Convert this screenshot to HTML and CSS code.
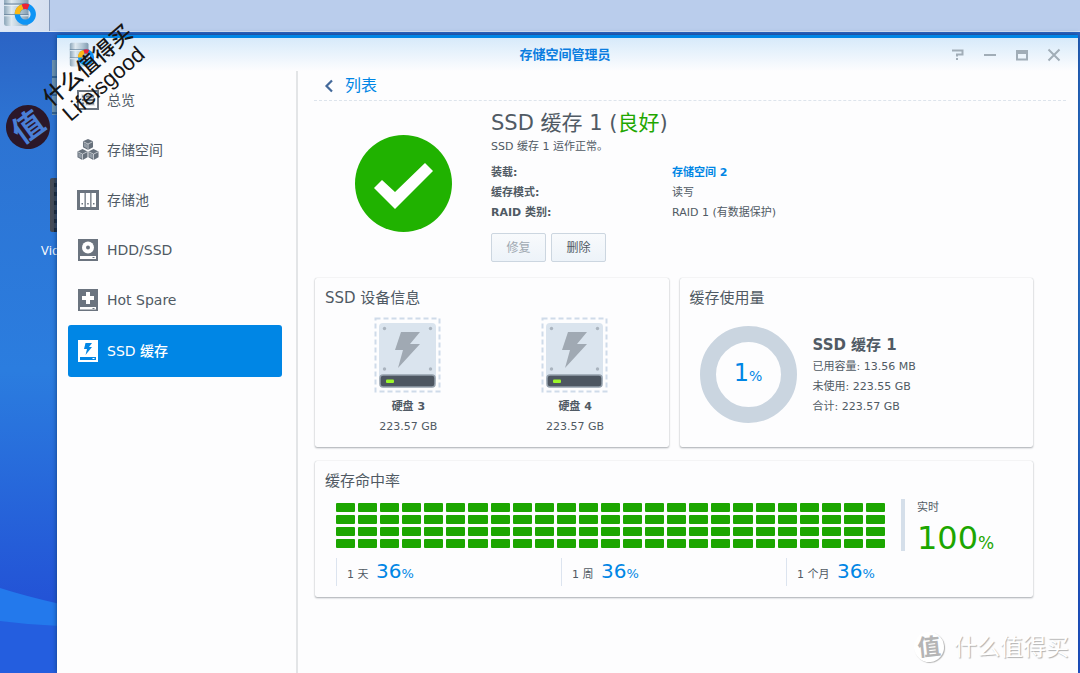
FILE: index.html
```html
<!DOCTYPE html>
<html lang="zh-CN">
<head>
<meta charset="utf-8">
<title>存储空间管理员</title>
<link rel="stylesheet" href="styles.css">
</head>
<body>
<svg class="defs" aria-hidden="true">
  <defs>
    <linearGradient id="steel" x1="0" x2="1">
      <stop offset="0" stop-color="#8ba5b8"/><stop offset=".3" stop-color="#dfe9f0"/><stop offset=".65" stop-color="#b4c8d6"/><stop offset="1" stop-color="#809bb0"/>
    </linearGradient>
    <symbol id="app" viewBox="0 0 32 32">
      <rect x="1" y="1" width="23" height="29" rx="2" fill="url(#steel)"/>
      <path d="M1 9.500h23M1 19.500h23" stroke="#64809a" stroke-width="1"/>
      <path d="M1 10.500h23M1 20.500h23" stroke="#eef5fa" stroke-width="1"/>
      <circle cx="21" cy="19" r="7.500" fill="none" stroke="#0e94f5" stroke-width="5"/>
      <path d="M13.500 19A7.500 7.500 0 0 1 18.500 12" fill="none" stroke="#fdb813" stroke-width="5"/>
      <path d="M18.500 12A7.500 7.500 0 0 1 24 12.200" fill="none" stroke="#ee2233" stroke-width="5"/>
    </symbol>
    <symbol id="cube" viewBox="0 0 12 12">
      <path d="M6 0l5.500 2.500v6.500L6 12 .5 9V2.500z" fill="#67717c"/>
      <path d="M1 3l5 2.500L11 3M6 5.500V12" fill="none" stroke="#e3e7ea" stroke-width=".8"/>
      <path d="M1.500 4.300l3.700 1.900v4L1.500 8.300z" fill="#929ba5"/>
    </symbol>
    <symbol id="disk" viewBox="0 0 68 76">
      <rect x="1.500" y="1.500" width="64" height="73" fill="none" stroke="#cfdbe9" stroke-width="2" stroke-dasharray="5 3"/>
      <rect x="5" y="6" width="57" height="60" rx="4" fill="#dae4ee"/>
      <g fill="#aab4bf"><circle cx="10.500" cy="11.500" r="1.700"/><circle cx="56.500" cy="11.500" r="1.700"/><circle cx="10.500" cy="52" r="1.700"/><circle cx="56.500" cy="52" r="1.700"/></g>
      <path d="M27 15h19L36 27h10L24 51l5-18h-8z" fill="#a0a9b3"/>
      <rect x="6" y="58" width="55" height="12" rx="3" fill="#4d5661" stroke="#94a0ac" stroke-width="1.500"/>
      <rect x="12" y="62.500" width="8" height="3.500" rx="1" fill="#9cf72b"/>
    </symbol>
  </defs>
</svg>

<div class="desktop">
  <header class="taskbar">
    <button class="task" type="button" aria-label="存储空间管理员"><svg width="34" height="34"><use href="#app"/></svg></button>
  </header>

  <svg class="wave" viewBox="0 0 60 85" preserveAspectRatio="none" aria-hidden="true">
    <path d="M0 0Q25 8 60 16V85H0z" fill="#2379ec"/><path d="M0 33Q30 37 60 38V85H0z" fill="#245edf"/>
  </svg>
  <div class="shortcut-store"></div>
  <div class="shortcut-video"></div>
  <span class="shortcut-label">Vid</span>

  <section class="window">
    <div class="titlebar">
      <svg class="title-icon" width="26" height="26"><use href="#app"/></svg>
      <h1>存储空间管理员</h1>
      <div class="controls">
        <button type="button" aria-label="帮助"><svg width="14" height="14" viewBox="0 0 14 14"><path d="M1 2.500h10.500v4H6v2" fill="none" stroke="#a1adb7" stroke-width="2"/><path d="M5 10h2v2H5z" fill="#a1adb7"/></svg></button>
        <button type="button" aria-label="最小化"><svg width="14" height="14" viewBox="0 0 14 14"><path d="M1 7h12" stroke="#a1adb7" stroke-width="2"/></svg></button>
        <button type="button" aria-label="最大化"><svg width="14" height="14" viewBox="0 0 14 14"><path d="M1 2h12v10.500H1z" fill="#a1adb7"/><path d="M3 6h8v4.500H3z" fill="#edf5fc"/></svg></button>
        <button type="button" aria-label="关闭"><svg width="14" height="14" viewBox="0 0 14 14"><path d="M1.500 1.500l11 11m0-11l-11 11" stroke="#a1adb7" stroke-width="2"/></svg></button>
      </div>
    </div>

    <div class="body">
      <nav class="sidebar">
        <a href="#"><svg width="22" height="22" viewBox="0 0 22 22"><rect x="1" y="2" width="20" height="18" fill="none" stroke="#6b747f" stroke-width="2"/><path d="M4 5h14v12H4z" fill="#e4e7ea"/><path d="M5 7.500h2m2 0h8M5 11h2m2 0h8M5 14.500h2m2 0h8" stroke="#6b747f" stroke-width="1.800"/></svg>总览</a>
        <a href="#"><svg width="24" height="24" viewBox="0 0 24 24"><use href="#cube" x="6" y="0" width="12" height="12"/><use href="#cube" x="0" y="11" width="12" height="12"/><use href="#cube" x="12" y="11" width="12" height="12"/></svg>存储空间</a>
        <a href="#"><svg width="22" height="22" viewBox="0 0 22 22"><path d="M0 1h22v20H0z" fill="#6b747f"/><path d="M3 4h4.500v14H3zM8.800 4h4.400v14H8.800zM14.500 4H19v14h-4.500z" fill="#fff"/><path d="M4.500 14h1.500v1.500h-1.500zM10.200 14h1.500v1.500h-1.500zM16 14h1.500v1.500H16z" fill="#6b747f"/></svg>存储池</a>
        <a href="#"><svg width="22" height="22" viewBox="0 0 22 22"><path d="M1 0h20v22H1z" fill="#6b747f"/><circle cx="11" cy="8.500" r="6" fill="#fff"/><circle cx="11" cy="8.500" r="2" fill="#6b747f"/><path d="M3 17h16v3H3z" fill="#fff"/><path d="M15.500 18h2v1h-2z" fill="#6b747f"/></svg>HDD/SSD</a>
        <a href="#"><svg width="22" height="22" viewBox="0 0 22 22"><path d="M1 0h20v22H1z" fill="#6b747f"/><path d="M9 3h4v4h4v4h-4v4H9v-4H5V7h4z" fill="#fff"/><path d="M3 18h16v2.500H3z" fill="#fff"/><path d="M15.500 19h2v1h-2z" fill="#6b747f"/></svg>Hot Spare</a>
        <a href="#" class="active"><svg width="22" height="22" viewBox="0 0 22 22"><path d="M1 0h20v22H1z" fill="#fff"/><path d="M8.500 3H15l-3 4h3l-6.500 8 1.500-6H7zM3 17h16v3H3z" fill="#0086e5"/><path d="M15.500 18h2v1h-2z" fill="#fff"/></svg>SSD 缓存</a>
      </nav>

      <main class="main">
        <a class="back" href="#"><svg width="10" height="14" viewBox="0 0 10 14"><path d="M8 1.500L2.500 7 8 12.500" fill="none" stroke="#43699a" stroke-width="2.200"/></svg>列表</a>

        <div class="content">
          <section class="summary">
            <svg class="health" width="97" height="97" viewBox="0 0 97 97"><circle cx="48.500" cy="48.500" r="48.500" fill="#20b200"/><path d="M19 53l8-8 13 12 30-29 8 8-38 38z" fill="#fff"/></svg>
            <div class="details">
              <h2>SSD 缓存 1 (<span class="good">良好</span>)</h2>
              <p>SSD 缓存 1 运作正常。</p>
              <dl>
                <dt>装载:</dt><dd><a href="#">存储空间 2</a></dd>
                <dt>缓存模式:</dt><dd>读写</dd>
                <dt>RAID 类别:</dt><dd>RAID 1 (有数据保护)</dd>
              </dl>
              <div class="actions"><button type="button" disabled>修复</button><button type="button">删除</button></div>
            </div>
          </section>

          <div class="cards">
            <section class="card">
              <h3>SSD 设备信息</h3>
              <div class="disks">
                <div class="disk"><svg width="68" height="76"><use href="#disk"/></svg><b>硬盘 3</b><span>223.57 GB</span></div>
                <div class="disk"><svg width="68" height="76"><use href="#disk"/></svg><b>硬盘 4</b><span>223.57 GB</span></div>
              </div>
            </section>
            <section class="card">
              <h3>缓存使用量</h3>
              <div class="usage">
                <div class="donut"><span>1<small>%</small></span></div>
                <div class="capacity"><h4>SSD 缓存 1</h4><p>已用容量: 13.56 MB</p><p>未使用: 223.55 GB</p><p>合计: 223.57 GB</p></div>
              </div>
            </section>
            <section class="card wide">
              <h3>缓存命中率</h3>
              <div class="hits">
                <div class="bars" id="bars"></div>
                <div class="live"><span>实时</span><strong>100<small>%</small></strong></div>
              </div>
              <div class="history">
                <div>1 天 <strong>36<small>%</small></strong></div>
                <div>1 周 <strong>36<small>%</small></strong></div>
                <div>1 个月 <strong>36<small>%</small></strong></div>
              </div>
            </section>
          </div>
        </div>
      </main>
    </div>
  </section>

  <div class="stamp">值</div>
  <div class="signature">什么值得买<br>Lifeisgood</div>
  <div class="brand"><span class="brand-mark">值</span><span>什么值得买</span></div>
</div>
<script src="bars.js"></script>
</body>
</html>
```
FILE: styles.css
```css
* { box-sizing: border-box; }
body, h1, h2, h3, h4, p, dl, dd { margin: 0; }
body {
  font: 11px/20px "DejaVu Sans", "Noto Sans CJK SC", sans-serif;
  color: #505a64;
}
a { color: inherit; text-decoration: none; }
button { font: inherit; padding: 0; border: 0; background: none; }
svg { display: block; flex: none; }
.defs { position: absolute; width: 0; height: 0; }

.desktop {
  position: relative;
  display: flex;
  flex-direction: column;
  min-height: 100vh;
  overflow: hidden;
  background: linear-gradient(#2b63c4 30px, #2d73d2 120px, #2b7ddf 370px, #2353d6 600px);
}
.taskbar {
  height: 32px;
  overflow: hidden;
  background: #bacdec;
  border-bottom: 1px solid #dbe7f5;
}
.task {
  display: flex;
  align-items: flex-end;
  width: 50px;
  height: 31px;
  padding: 0 0 3px 3px;
  background: linear-gradient(90deg, #e1e9f6, #d5dfef);
  border-right: 1px solid #8498b8;
}
.wave { position: absolute; left: 0; bottom: 0; width: 60px; height: 85px; }
.shortcut-store {
  position: absolute; left: 52px; top: 60px; width: 30px; height: 55px;
  background: repeating-linear-gradient(#6f93ad 0 16px, #35628c 16px 18px);
}
.shortcut-video {
  position: absolute; left: 50px; top: 178px; width: 30px; height: 54px;
  background: repeating-linear-gradient(#3c4048 0 5px, #1e2228 5px 9px);
  border-left: 4px solid #464b55; border-radius: 2px;
}
.shortcut-label {
  position: absolute; left: 41px; top: 240px;
  font: 13px/20px "Open Sans", sans-serif; color: #fff;
}

.window {
  position: relative;
  flex: 1;
  display: flex;
  flex-direction: column;
  margin: 3px 2px 0 57px;
  background: #fdfdfe;
  border-top: 3px solid #0086e5;
  box-shadow: 0 0 5px 0 #10407f;
}
.titlebar {
  display: grid;
  grid-template-columns: 1fr auto 1fr;
  align-items: center;
  height: 33px;
  padding: 0 17px 0 12px;
  background: linear-gradient(#d7eafa, #fdfdfe);
}
h1 { font-size: 13px; color: #0a7de0; }
.controls { display: flex; justify-content: flex-end; gap: 18px; }
.body { flex: 1; display: flex; }

.sidebar {
  width: 241px;
  padding: 4px 14px 0 11px;
  border-right: 2px solid #e3e5e7;
}
.sidebar a {
  display: flex;
  align-items: center;
  height: 50px;
  padding-left: 9px;
  gap: 8px;
  font-size: 14px;
  border-radius: 3px;
}
.sidebar a svg { width: 22px; }
.sidebar .active { height: 52px; background: #0086e5; color: #fff; font-weight: 500; }

.main { flex: 1; padding: 0 12px 16px 16px; }
.back {
  display: flex;
  align-items: center;
  gap: 11px;
  height: 30px;
  padding-left: 10px;
  font-size: 16px;
  color: #0086e5;
  border-bottom: 1px dashed #dde4ec;
}
.content { padding: 8px 33px 0 1px; }
.summary { display: flex; align-items: center; gap: 39px; padding: 0 0 16px 40px; }
.health { margin-bottom: 4px; }
.details { flex: 1; }
h2 { font-size: 21px; line-height: 28px; font-weight: 400; }
.good { color: #1fa700; }
dl { display: grid; grid-template-columns: 181px 1fr; margin: 6px 0 10px; }
dt { font-weight: 700; }
dt, dd { line-height: 20px; }
dd a { color: #0086e5; font-weight: 700; }
.actions { display: flex; gap: 5px; }
.actions button {
  width: 55px;
  height: 29px;
  font-size: 12px;
  color: #505a64;
  background: linear-gradient(#f8fafc, #edf3f9);
  border: 1px solid #ccd6e0;
  border-radius: 2px;
}
.actions button:disabled { color: #a0a9b2; }

.cards { display: grid; grid-template-columns: 1fr 1fr; gap: 14px 11px; }
.card {
  min-height: 168px;
  padding: 10px;
  border-radius: 2px;
  box-shadow: 0 1px 2px 0 #a9adb1, 0 0 1px 0 #c5c9cc;
}
.wide { grid-column: 1 / -1; min-height: 136px; }
h3 { font-size: 15px; line-height: 21px; font-weight: 400; }
.disks { display: grid; grid-template-columns: 1fr 1fr; }
.disk { display: flex; flex-direction: column; align-items: center; padding-top: 8px; }
.disk b { margin-top: 4px; }
.usage { display: flex; align-items: center; gap: 16px; padding: 17px 0 0 10px; }
.donut {
  display: flex;
  align-items: center;
  justify-content: center;
  width: 97px;
  height: 97px;
  border: 16px solid #cad5e0;
  border-radius: 50%;
  font-size: 24px;
  color: #0086e5;
}
.donut small { font-size: 14px; }
h4 { font-size: 15px; line-height: 24px; }

.hits { display: flex; padding: 7px 0 0 11px; }
.bars {
  flex: 1;
  display: grid;
  grid-template-columns: repeat(25, 1fr);
  grid-auto-rows: 9px;
  gap: 3px;
  padding-top: 4px;
}
.bars i { background: #1ca600; border-radius: 1px; }
.live {
  display: flex;
  flex-direction: column;
  width: 122px;
  height: 52px;
  margin-left: 16px;
  padding-left: 12px;
  border-left: 4px solid #d5dfea;
}
.live span { line-height: 17px; }
.live strong { font-size: 32px; line-height: 44px; font-weight: 400; color: #1ca600; }
.live small { font-size: 17px; }
.history { display: flex; padding: 7px 0 0 11px; }
.history div {
  width: 225px;
  height: 28px;
  padding-left: 10px;
  line-height: 26px;
  border-left: 1px solid #dce4ef;
}
.history strong { margin-left: 4px; font-size: 20px; font-weight: 400; color: #0086e5; }
.history small { font-size: 13px; }

.stamp {
  position: absolute; left: 6px; top: 105px; width: 44px; height: 44px;
  border-radius: 50%;
  background: #2b1729;
  color: #4a7fd6;
  font-size: 31px; font-weight: 700; line-height: 44px; text-align: center;
  transform: rotate(-36deg);
}
.signature {
  position: absolute; left: 36px; top: 51px; width: 120px;
  font: 22px/24px "Liberation Sans", "Noto Sans CJK SC", sans-serif;
  font-weight: 500;
  color: #151515; text-align: center; white-space: nowrap;
  transform: rotate(-41deg);
}
.brand {
  position: absolute; right: 11px; bottom: 10px;
  display: flex; align-items: center; gap: 10px;
  font-size: 23px; line-height: 32px;
  color: #fff; text-shadow: 1px 1px 1px #b0b0b0;
}
.brand-mark {
  width: 30px; height: 30px;
  border-radius: 50%;
  background: #fff;
  box-shadow: 1px 1px 1px #b5b5b5;
  color: #b5b5b5; text-shadow: none;
  font-weight: 700; line-height: 30px; text-align: center;
  transform: rotate(-6deg);
}
```
FILE: bars.js
```js
const bars = document.getElementById("bars");
for (let i = 0; i < 100; i++) {
  bars.appendChild(document.createElement("i"));
}
```
